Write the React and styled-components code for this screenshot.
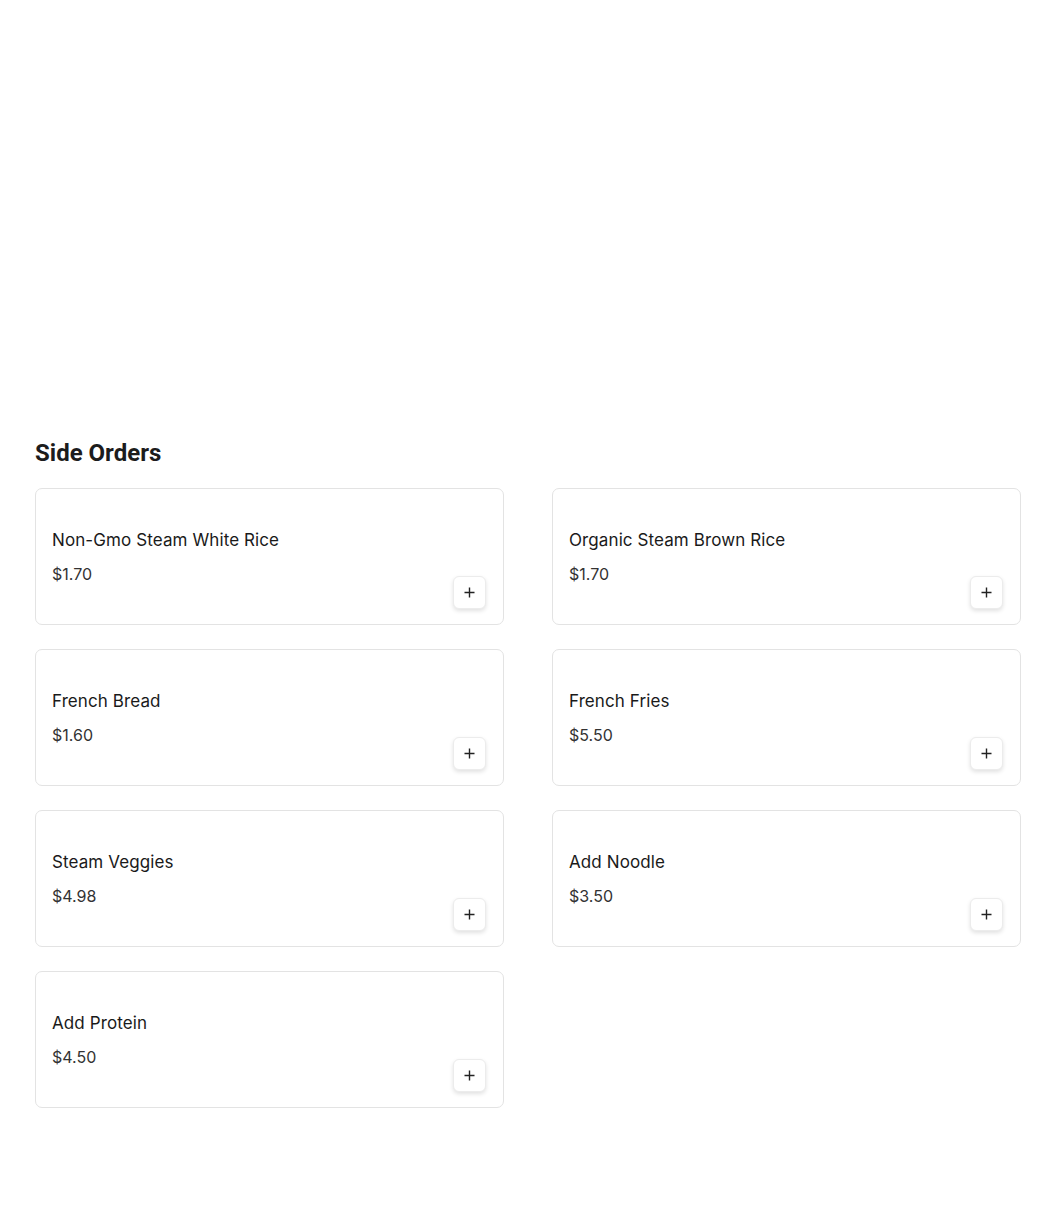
import styled, { createGlobalStyle } from "styled-components"

const items = [
	{ name: "Non-Gmo Steam White Rice", price: "$1.70" },
	{ name: "Organic Steam Brown Rice", price: "$1.70" },
	{ name: "French Bread", price: "$1.60" },
	{ name: "French Fries", price: "$5.50" },
	{ name: "Steam Veggies", price: "$4.98" },
	{ name: "Add Noodle", price: "$3.50" },
	{ name: "Add Protein", price: "$4.50" },
]

const GlobalStyle = createGlobalStyle`
	body {
		margin: 0;
		background: #fff;
		font-family: "Inter", "Liberation Sans", sans-serif;
		color: #1a1a1a;
	}
`

const PlusIcon = () => (
	<svg width="11" height="11" viewBox="0 0 11 11">
		<path d="M5.5 0.5v10M0.5 5.5h10" stroke="#222" strokeWidth="1.4" />
	</svg>
)

const App = () => {
	return (
		<>
			<GlobalStyle />
			<Page>
				<Title>Side Orders</Title>
				<Grid>
					{items.map(item => (
						<Card key={item.name}>
							<Info>
								<Name>{item.name}</Name>
								<Price>{item.price}</Price>
							</Info>
							<AddButton aria-label="Add">
								<PlusIcon />
							</AddButton>
						</Card>
					))}
				</Grid>
			</Page>
		</>
	)
}

const Page = styled.div`
	padding: 437px 29px 100px 35px;
`

const Title = styled.h2`
	margin: 0 0 19px;
	font-family: Roboto, "Liberation Sans", sans-serif;
	font-weight: 700;
	font-size: 24px;
	line-height: 32px;
	color: #1c1c1c;
`

const Grid = styled.div`
	display: grid;
	grid-template-columns: 1fr 1fr;
	column-gap: 48px;
	row-gap: 24px;
`

const Card = styled.div`
	display: flex;
	justify-content: space-between;
	align-items: flex-end;
	box-sizing: border-box;
	height: 137px;
	padding: 39px 17px 15px 16px;
	border: 1px solid #e3e3e3;
	border-radius: 7px;
	background: #fff;
`

const Info = styled.div`
	display: flex;
	flex-direction: column;
	align-self: flex-start;
`

const Name = styled.div`
	font-size: 17px;
	line-height: 24px;
	font-weight: 400;
	color: #1a1a1a;
	letter-spacing: 0.1px;
`

const Price = styled.div`
	margin-top: 10px;
	font-size: 16px;
	line-height: 24px;
	color: #333;
`

const AddButton = styled.button`
	display: flex;
	align-items: center;
	justify-content: center;
	width: 33px;
	height: 33px;
	padding: 0;
	border: 1px solid #ececec;
	border-radius: 6px;
	background: #fff;
	box-shadow: 0 2px 4px rgba(0, 0, 0, 0.12);
	cursor: pointer;
`

export default App
